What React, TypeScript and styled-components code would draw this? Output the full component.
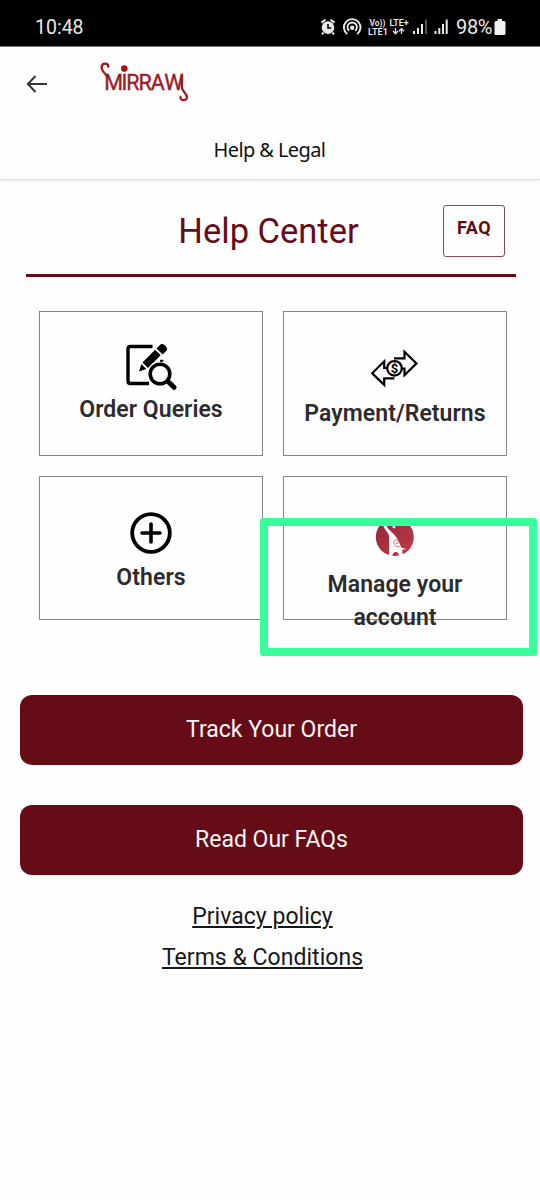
import React from 'react';
import styled, { createGlobalStyle } from 'styled-components';

const maroon = '#650c17';

const GlobalStyle = createGlobalStyle`
  * { box-sizing: border-box; }
  body { margin: 0; background: #fefefe; font-family: Roboto, sans-serif; }
`;

const Screen = styled.div`
  width: 540px;
  height: 1200px;
  overflow: hidden;
  background: #fefefe;
`;

const StatusBar = styled.div`
  display: flex;
  align-items: center;
  height: 47px;
  padding: 7px 34px 0 35px;
  background: #000;
  border-bottom: 1px solid #777;
  color: #e9e9e9;
`;

const Clock = styled.span`
  flex: 1;
  padding-top: 2px;
  font-size: 19.5px;
  line-height: 24px;
`;

const StatusIcons = styled.svg`
  display: block;
  margin-right: 6px;
`;

const BatteryText = styled.span`
  font-size: 20px;
  line-height: 24px;
  letter-spacing: -0.4px;
`;

const BatteryIcon = styled.svg`
  display: block;
  margin-left: 2px;
`;

const Header = styled.header`
  height: 133px;
  border-bottom: 1px solid #dedede;
  box-shadow: 0 1px 3px rgba(0, 0, 0, 0.08);
`;

const NavRow = styled.div`
  display: flex;
  align-items: center;
  height: 73px;
  padding-left: 26px;
`;

const Logo = styled.svg`
  display: block;
  margin: -3px 0 0 51px;
  overflow: visible;
`;

const PageTitle = styled.div`
  padding: 16px 1px 0 0;
  font-family: 'Noto Sans', sans-serif;
  font-size: 20px;
  line-height: 28px;
  letter-spacing: -0.6px;
  text-align: center;
  color: #111;
`;

const TitleBar = styled.div`
  display: grid;
  grid-template-columns: 1fr auto 1fr;
  margin: 0 24px 0 26px;
  height: 97px;
  padding: 25px 11px 0 0;
  border-bottom: 3px solid ${maroon};
`;

const Heading = styled.h1`
  grid-column: 2;
  margin: 5px 0 0 6px;
  font-size: 34.5px;
  font-weight: 400;
  line-height: 42px;
  letter-spacing: 0;
  color: ${maroon};
`;

const FaqButton = styled.button`
  justify-self: end;
  width: 62px;
  height: 52px;
  padding: 0 0 7px;
  border: 1px solid #8f4853;
  border-radius: 3px;
  background: transparent;
  font: 700 18px Roboto, sans-serif;
  letter-spacing: 0.5px;
  color: ${maroon};
`;

const CardGrid = styled.div`
  display: grid;
  grid-template-columns: 224px 224px;
  grid-auto-rows: 144.5px;
  gap: 20px;
  padding: 34px 0 0 39px;
`;

const Card = styled.div<{ $top: number }>`
  position: relative;
  display: flex;
  flex-direction: column;
  align-items: center;
  padding-top: ${(p) => p.$top}px;
  border: 1px solid #858585;
`;

const CardIcon = styled.svg`
  display: block;
  flex-shrink: 0;
`;

const CardLabel = styled.div<{ $gap: number }>`
  margin-top: ${(p) => p.$gap}px;
  width: 200px;
  font-size: 23px;
  font-weight: 600;
  line-height: 33px;
  letter-spacing: 0.06px;
  text-align: center;
  color: #2c2b2e;
`;

const Highlight = styled.div`
  position: absolute;
  left: -24px;
  top: 41.5px;
  width: 277px;
  height: 138px;
  border: 8px solid #36ff9c;
  border-radius: 3px;
`;

const Actions = styled.div`
  display: flex;
  flex-direction: column;
  gap: 40px;
  padding: 75px 17px 0 20px;
`;

const ActionButton = styled.button`
  height: 70px;
  padding: 0 0 2px;
  border: 0;
  border-radius: 12px;
  background: ${maroon};
  font: 400 23px Roboto, sans-serif;
  color: #fdf4f4;
`;

const Links = styled.nav`
  display: flex;
  flex-direction: column;
  align-items: center;
  padding: 21px 15px 0 0;
`;

const LegalLink = styled.a`
  font-size: 23px;
  line-height: 41px;
  letter-spacing: 0.03px;
  color: #16171a;
  text-decoration: underline;
  text-decoration-thickness: 2px;
  text-underline-offset: 2px;
`;

const StatusGlyphs = () => (
  <StatusIcons width="131" height="24" viewBox="319 15 131 24" fill="#e9e9e9">
    <circle cx="328" cy="27.6" r="6.3" />
    <path d="M321.5 22.6l4-3M334.5 22.6l-4-3M323.5 32.5l-1.6 1.8M332.5 32.5l1.6 1.8" stroke="#e9e9e9" strokeWidth="2" />
    <path d="M328 24v4h3.3" stroke="#000" strokeWidth="1.6" fill="none" />
    <circle cx="352.2" cy="27.7" r="2.2" />
    <path d="M347.200 34a8.300 8.300 0 1 1 10 0M349.200 30.800a4.700 4.700 0 1 1 6 0" fill="none" stroke="#e9e9e9" strokeWidth="1.9" />
    <g fontFamily="Roboto, sans-serif" fontWeight="600">
      <text x="369.5" y="25.8" fontSize="9" textLength="16" lengthAdjust="spacingAndGlyphs">Vo))</text>
      <text x="368" y="34.6" fontSize="9.6" textLength="20" lengthAdjust="spacingAndGlyphs">LTE1</text>
      <text x="389.5" y="25.8" fontSize="9" textLength="19" lengthAdjust="spacingAndGlyphs">LTE+</text>
    </g>
    <path d="M395.5 28v5M393 31l2.500 2.700 2.500-2.700M401.500 34v-5M399 31.200l2.500-2.700 2.500 2.700" fill="none" stroke="#e9e9e9" strokeWidth="1.3" />
    <path d="M413 31h2v3h-2zM417 28h2v6h-2zM421 24h2v10h-2zM434.500 31h2v3h-2zM438.300 28h2v6h-2zM442 24h2v10h-2zM445.700 19.500h2v14.500h-2z" />
    <path d="M425 19.500h2v14.500h-2z" fill="#555" />
  </StatusIcons>
);

const MirrawLogo = () => (
  <Logo width="90" height="42" viewBox="100 61 90 42">
    <text x="104.2 121.4 126.2 138.4 150.8 164.2" y="90" fontFamily="Roboto, sans-serif" fontSize="21.500" fill="#9a1d24" stroke="#9a1d24" strokeWidth=".4">MIRRAW</text>
    <circle cx="124.300" cy="68.600" r="3.300" fill="#a31217" />
    <g fill="none" stroke="#9a1d24" strokeWidth="2.300" strokeLinecap="round">
      <path d="M108.300 66.800c0-4-6.500-4.500-6.800.5-.2 4 3 4.500 5.300 9" />
      <path d="M182 75v13c0 3 5 5.500 5 9 0 4.500-7 4-6.500-.2" />
    </g>
  </Logo>
);

const OrderIcon = () => (
  <CardIcon width="52" height="48" viewBox="125 343 52 48">
    <path d="M152.500 346.500h-22q-2.500 0-2.500 2.500v32q0 2.500 2.500 2.500H149" fill="none" stroke="#000" strokeWidth="3.400" />
    <path d="M139 371.500l2.400-7.600 5 5zM142.500 362.500l12.700-12.700 5.500 5.500-12.700 12.700zM156.500 348.500l3.500-3.600q2-2 4.500.2l1.600 1.700q2 2.300 0 4.300l-3.500 3.500z" />
    <circle cx="160" cy="374" r="12.700" fill="#fff" />
    <circle cx="160" cy="374" r="9.800" fill="#fff" stroke="#000" strokeWidth="3.600" />
    <path d="M168 381.500l6 5.800" stroke="#000" strokeWidth="5" strokeLinecap="round" />
    <path d="M160 360.800h3.300" stroke="#000" strokeWidth="2" />
  </CardIcon>
);

const PaymentIcon = () => (
  <CardIcon width="48" height="48" viewBox="371 344 48 48">
    <g fill="none" stroke="#000" strokeWidth="2.200" strokeLinejoin="miter">
      <path d="M394 358.300h10.500v-6.500l12 11.600-12 11.800v-6.700h-3" />
      <path d="M387.500 368h-3.300v-6.700l-12 12 12 11.600v-6.600H394.500" />
      <circle cx="394.500" cy="368.300" r="7.300" />
    </g>
    <text x="394.500" y="373" textAnchor="middle" fontFamily="Roboto, sans-serif" fontWeight="700" fontSize="13">$</text>
  </CardIcon>
);

const PlusIcon = () => (
  <CardIcon width="44" height="44" viewBox="129.500 511 44 44" fill="none" stroke="#000">
    <circle cx="151.500" cy="533" r="18.800" strokeWidth="3.800" />
    <path d="M151.500 524v18M142.500 533h18" strokeWidth="3.600" strokeLinecap="round" />
  </CardIcon>
);

const AccountIcon = () => (
  <CardIcon width="40" height="40" viewBox="375 517 40 40">
    <defs>
      <linearGradient id="disc" x1="0" y1="0" x2="1" y2="1">
        <stop offset="0" stopColor="#8e2638" />
        <stop offset="1" stopColor="#c43a48" />
      </linearGradient>
    </defs>
    <circle cx="394.800" cy="537" r="19" fill="url(#disc)" />
    <path d="M383 525l3.200-.6c1.200 4.600 4.300 6.300 7.700 9.800 3.500 3.800 5.600 8.600 7.300 13.300l5.500 1.800-4.500.3.600 6.500h-3.600c0-5.500-6.700-5.500-6.900 0h-3.100V536.500c-.6-4-4.200-5.800-6.200-11.500z" fill="#fff" />
    <path d="M399.800 547c-5-.3-7-3.500-5.300-6.300 2-2.200 4.800.3 3.500 2.500-1 1-2 .3-1.800-.8" fill="none" stroke="#b55966" strokeWidth=".9" />
    <path d="M391.600 527l4-1.500-.8 3z" fill="#fff" />
  </CardIcon>
);

export default function App() {
  return (
    <Screen>
      <GlobalStyle />
      <StatusBar>
        <Clock>10:48</Clock>
        <StatusGlyphs />
        <BatteryText>98%</BatteryText>
        <BatteryIcon width="12" height="18" viewBox="0 0 12 18">
          <path d="M3.500 1h4.500v2h2q1.500 0 1.500 1.500v11q0 1.500-1.500 1.500h-8.500Q.5 17 .5 15.500v-11Q.5 3 2 3h1.500z" fill="#f2f2f2" />
        </BatteryIcon>
      </StatusBar>
      <Header>
        <NavRow>
          <svg width="23" height="22" viewBox="0 0 23 22" fill="none" stroke="#333" strokeWidth="1.900">
            <path d="M21 11H2M9.500 3L1.800 11l7.700 8" />
          </svg>
          <MirrawLogo />
        </NavRow>
        <PageTitle>Help &amp; Legal</PageTitle>
      </Header>
      <TitleBar>
        <Heading>Help Center</Heading>
        <FaqButton>FAQ</FaqButton>
      </TitleBar>
      <CardGrid>
        <Card $top={31}>
          <OrderIcon />
          <CardLabel $gap={2}>Order Queries</CardLabel>
        </Card>
        <Card $top={32}>
          <PaymentIcon />
          <CardLabel $gap={5}>Payment/Returns</CardLabel>
        </Card>
        <Card $top={34.5}>
          <PlusIcon />
          <CardLabel $gap={6}>Others</CardLabel>
        </Card>
        <Card $top={40.5}>
          <AccountIcon />
          <CardLabel $gap={11}>Manage your account</CardLabel>
          <Highlight />
        </Card>
      </CardGrid>
      <Actions>
        <ActionButton>Track Your Order</ActionButton>
        <ActionButton>Read Our FAQs</ActionButton>
      </Actions>
      <Links>
        <LegalLink>Privacy policy</LegalLink>
        <LegalLink>Terms &amp; Conditions</LegalLink>
      </Links>
    </Screen>
  );
}
